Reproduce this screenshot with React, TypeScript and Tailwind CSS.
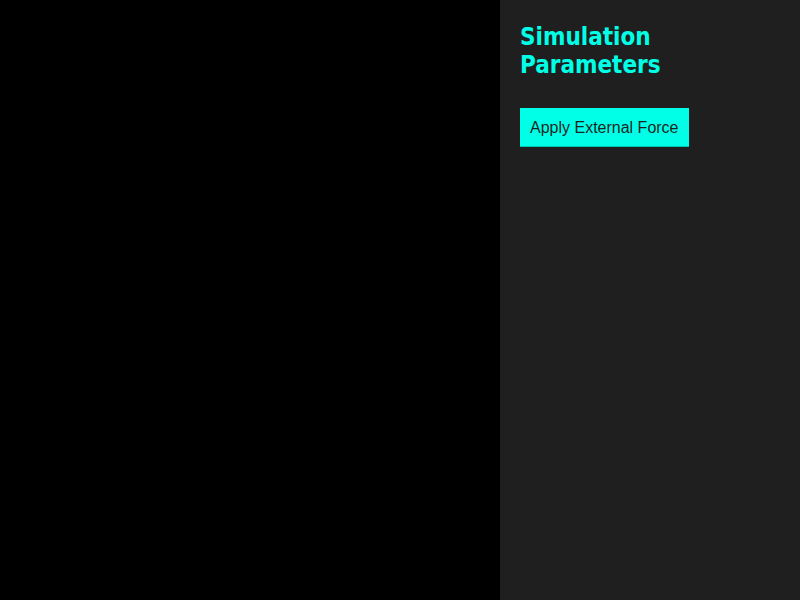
export default function App() {
  return (
    <div className="flex w-[800px] h-[600px]">
      <div className="w-[500px] h-full bg-black" />
      <div className="w-[300px] h-full bg-[#1f1f1f] p-5">
        <h2
          className="text-[24px] leading-[28px] font-bold text-[#00ffe6] mt-[3px] mb-[29px]"
          style={{ fontFamily: '"DejaVu Sans Condensed", Tahoma, sans-serif', fontStretch: 'condensed' }}
        >
          Simulation Parameters
        </h2>
        <button
          className="bg-[#00ffe6] text-[#1f1f1f] px-[10px] pt-[11px] pb-[9px] text-[16px] leading-[18px] border-b border-[#00c8b4]"
          style={{ fontFamily: '"Liberation Sans", Arial, sans-serif' }}
        >
          Apply External Force
        </button>
      </div>
    </div>
  );
}
